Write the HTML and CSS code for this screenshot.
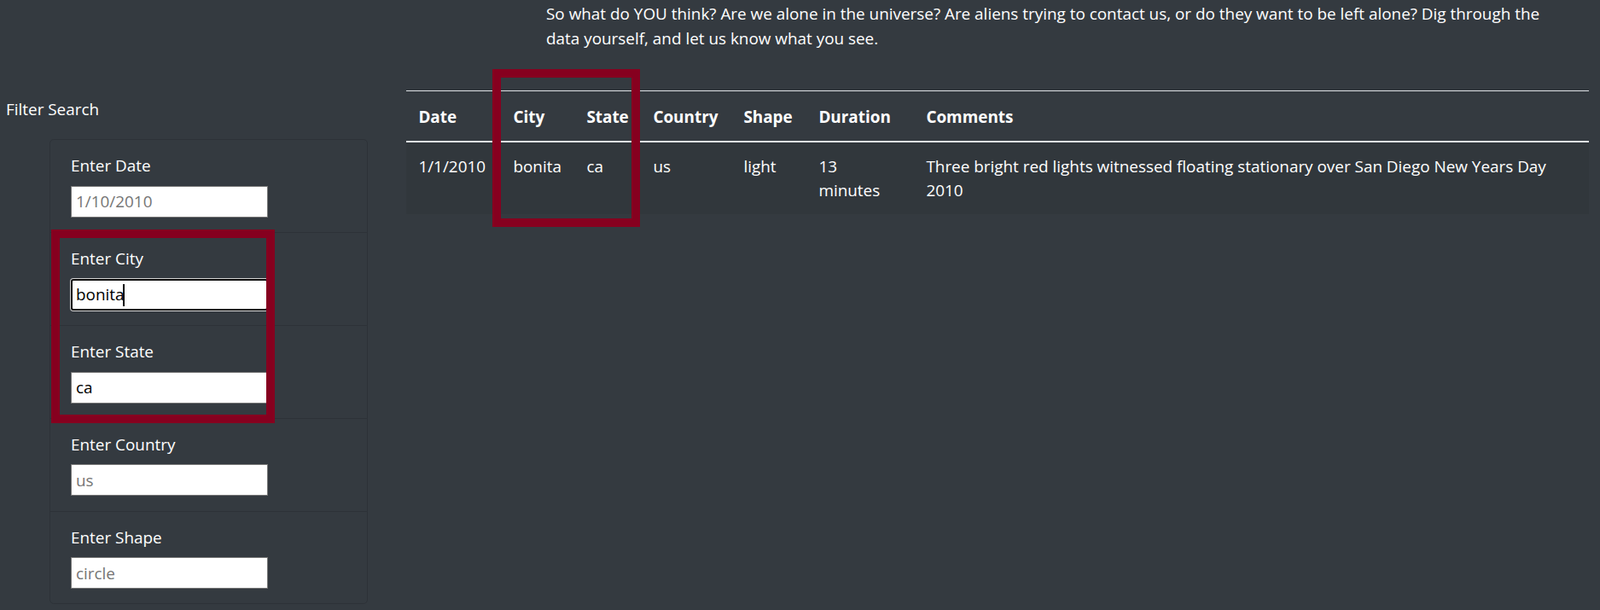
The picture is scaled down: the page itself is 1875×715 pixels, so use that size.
FILE: index.html
```html
<!DOCTYPE html>
<html lang="en">
<head>
<meta charset="utf-8">
<title>UFO Sightings</title>
<link rel="stylesheet" href="styles.css">
</head>
<body>
<div class="page">
  <aside class="sidebar">
    <div class="filter-title">Filter Search</div>
    <div class="card">
      <ul class="filters">
        <li class="filter"><label for="datetime">Enter Date</label><input class="field" id="datetime" type="text" placeholder="1/10/2010"></li>
        <li class="filter"><label for="city">Enter City</label><span class="field-wrap"><input class="field field-focused" id="city" type="text" value="bonita"><span class="caret"></span></span></li>
        <li class="filter"><label for="state">Enter State</label><input class="field" id="state" type="text" value="ca"></li>
        <li class="filter"><label for="country">Enter Country</label><input class="field" id="country" type="text" placeholder="us"></li>
        <li class="filter"><label for="shape">Enter Shape</label><input class="field" id="shape" type="text" placeholder="circle"></li>
      </ul>
    </div>
  </aside>
  <main class="content">
    <p class="intro">So what do YOU think? Are we alone in the universe? Are aliens trying to contact us, or do they want to be left alone? Dig through the data yourself, and let us know what you see.</p>
    <table class="ufo-table">
      <colgroup>
        <col class="c-date"><col class="c-city"><col class="c-state"><col class="c-country"><col class="c-shape"><col class="c-duration"><col>
      </colgroup>
      <thead>
        <tr><th>Date</th><th>City</th><th>State</th><th>Country</th><th>Shape</th><th>Duration</th><th>Comments</th></tr>
      </thead>
      <tbody>
        <tr><td>1/1/2010</td><td>bonita</td><td>ca</td><td>us</td><td>light</td><td>13 minutes</td><td>Three bright red lights witnessed floating stationary over San Diego New Years Day 2010</td></tr>
      </tbody>
    </table>
  </main>
</div>
<div class="highlight highlight-filters"></div>
<div class="highlight highlight-cols"></div>
</body>
</html>
```
FILE: styles.css
```css
* { box-sizing: border-box; }
html, body { margin: 0; padding: 0; }
body {
  background: #343a40;
  color: #fff;
  font-family: "Open Sans", "Noto Sans", sans-serif;
  font-size: 18.9px;
  line-height: 28.8px;
  width: 1875px;
  height: 715px;
  overflow: hidden;
  position: relative;
}
.page { display: flex; align-items: flex-start; }
.sidebar { width: 476px; flex: none; padding-top: 113.5px; }
.filter-title { padding-left: 7px; margin-bottom: 20.7px; }
.card {
  margin-left: 58px;
  width: 373px;
  border: 1px solid rgba(0,0,0,.125);
  border-radius: 5px;
}
.filters { list-style: none; margin: 0; padding: 0; }
.filter {
  padding: 15px 24px 17.1px;
  border-bottom: 1px solid rgba(0,0,0,.125);
}
.filter:last-child { border-bottom: 0; }
.filter label { display: block; padding-top: 1px; margin-bottom: 9px; }
.field {
  display: block;
  width: 231px;
  height: 37px;
  margin: 0;
  padding: 0 5px;
  border: 1px solid #767676;
  background: #fff;
  color: #000;
  font: inherit;
}
.field::placeholder { color: #757575; }
.field-wrap { display: block; position: relative; width: 231px; }
.field-focused {
  border: 2px solid #101010;
  border-radius: 3px;
  box-shadow: 0 0 0 1px #d0d0d0;
  padding-left: 4px;
}
.caret {
  position: absolute;
  left: 61px;
  top: 6px;
  width: 2px;
  height: 26px;
  background: #000;
}
.content { flex: 1; padding: 1.5px 13px 0 0; }
.intro { margin: 0 0 46px 164px; max-width: 1195px; line-height: 29.3px; }
.ufo-table { width: 100%; border-collapse: collapse; table-layout: fixed; }
.c-date { width: 111px; }
.c-city { width: 86px; }
.c-state { width: 78px; }
.c-country { width: 106px; }
.c-shape { width: 88px; }
.c-duration { width: 126px; }
.ufo-table th, .ufo-table td {
  text-align: left;
  vertical-align: top;
}
.ufo-table th {
  padding: 16px 14.4px 12.8px;
  font-weight: 700;
  border-top: 1px solid #dee2e6;
  border-bottom: 2px solid #dee2e6;
}
.ufo-table td { padding: 15.6px 14.4px 13.2px; line-height: 27.6px; }
.ufo-table tbody tr { background: rgba(0,0,0,.05); }
.highlight {
  position: absolute;
  border: 10px solid #86001f;
  pointer-events: none;
}
.highlight-filters { left: 60px; top: 269px; width: 262px; height: 227px; }
.highlight-cols { left: 577px; top: 81px; width: 173px; height: 185px; }
```
